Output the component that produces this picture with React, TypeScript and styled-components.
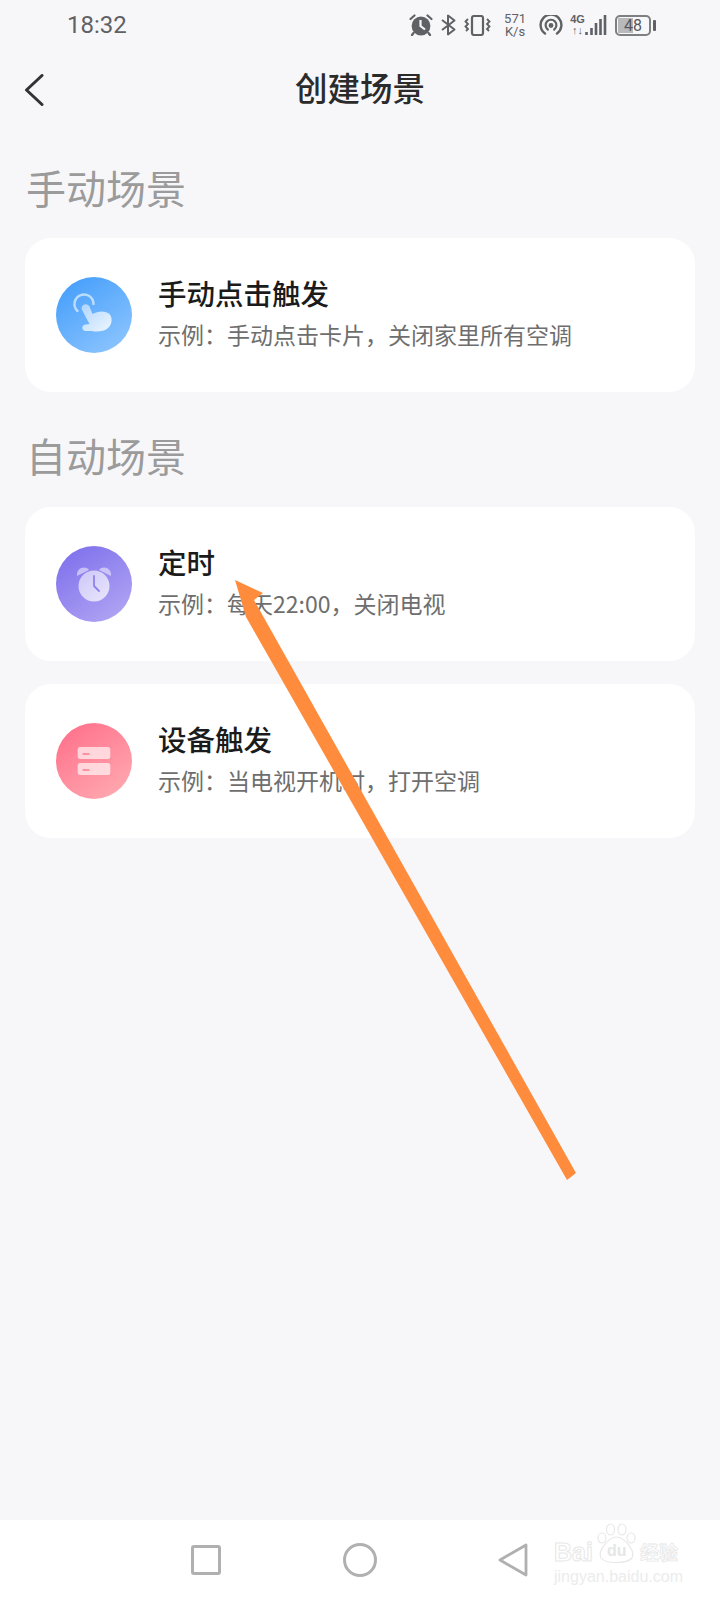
import styled, { createGlobalStyle } from 'styled-components';

const GlobalStyle = createGlobalStyle`
  html, body {
    margin: 0;
    padding: 0;
    background: #f7f7fa;
  }
  * {
    box-sizing: border-box;
  }
`;

const FONT = `"Noto Sans CJK SC", "Noto Sans", sans-serif`;

const HandIcon = () => (
  <svg width="76" height="76" viewBox="0 0 76 76">
    <defs>
      <linearGradient id="handFill" x1="0" y1="0" x2="1" y2="1">
        <stop offset="0" stopColor="#fff" stopOpacity="0.5" />
        <stop offset="1" stopColor="#fff" stopOpacity="0.85" />
      </linearGradient>
    </defs>
    <path d="M21.5 34 A9.5 9.5 0 1 1 37.5 27" fill="none" stroke="#fff" strokeOpacity="0.6" strokeWidth="2.4" strokeLinecap="round" />
    <path
      d="M25.5 32 C25.5 26 33 26 34 31 L36.5 37 C42 33.5 50 33.5 53.5 37 C57 41 56 48 52 51 C48 55 40 55 36 54 L30 54 C25 54 25 47.5 30 47.5 L33.5 47 Z"
      fill="url(#handFill)"
    />
  </svg>
);

const ClockIcon = () => (
  <svg width="76" height="76" viewBox="0 0 76 76">
    <defs>
      <linearGradient id="clockFill" x1="0" y1="0" x2="1" y2="1">
        <stop offset="0" stopColor="#fff" stopOpacity="0.55" />
        <stop offset="1" stopColor="#fff" stopOpacity="0.75" />
      </linearGradient>
    </defs>
    <path d="M21 30 C20 22 29 19 33 24 Z" fill="#fff" fillOpacity="0.5" />
    <path d="M55 30 C56 22 47 19 43 24 Z" fill="#fff" fillOpacity="0.5" />
    <circle cx="38" cy="40" r="15.5" fill="url(#clockFill)" />
    <path d="M38 30 V40 L43 45" fill="none" stroke="#8f82ee" strokeWidth="1.8" strokeLinecap="round" strokeLinejoin="round" />
  </svg>
);

const ServerIcon = () => (
  <svg width="76" height="76" viewBox="0 0 76 76">
    <rect x="21.7" y="24" width="32.6" height="12" rx="2.5" fill="#fff" fillOpacity="0.65" />
    <rect x="21.7" y="40" width="32.6" height="12" rx="2.5" fill="#fff" fillOpacity="0.65" />
    <path d="M27 31 H33 M27 47 H33" stroke="#fb7d90" strokeWidth="1.4" strokeLinecap="round" />
  </svg>
);

const AlarmGlyph = () => (
  <svg width="24" height="22" viewBox="0 0 24 22">
    <circle cx="12" cy="12" r="9.4" fill="#5f6165" />
    <path d="M11.5 6 V12 L16 15.5" fill="none" stroke="#f7f7fa" strokeWidth="2.2" />
    <path d="M1.5 5 L5.5 1.5 M22.5 5 L18.5 1.5 M4.5 19 L3 21 M19.5 19 L21 21" stroke="#5f6165" strokeWidth="2.2" strokeLinecap="round" />
  </svg>
);

const BluetoothGlyph = () => (
  <svg width="15" height="22" viewBox="0 0 15 22">
    <path d="M1 6 L13.5 15.5 L7 20.5 V1.5 L13.5 6.5 L1 16" fill="none" stroke="#5f6165" strokeWidth="2" strokeLinejoin="round" />
  </svg>
);

const VibrateGlyph = () => (
  <svg width="27" height="21" viewBox="0 0 27 21">
    <rect x="8" y="1" width="11" height="19" rx="2" fill="none" stroke="#5f6165" strokeWidth="2.2" />
    <path d="M4 4 L1.5 6.5 L4 9 L1.5 11.5 L4 14 L2 16 M23 4 L25.5 6.5 L23 9 L25.5 11.5 L23 14 L25 16" fill="none" stroke="#5f6165" strokeWidth="1.8" />
  </svg>
);

const HotspotGlyph = () => (
  <svg width="24" height="20" viewBox="0 0 24 20">
    <path d="M6 18.5 A10.4 10.4 0 1 1 18 18.5" fill="none" stroke="#5f6165" strokeWidth="2.4" strokeLinecap="round" />
    <path d="M8.8 14.5 A5.4 5.4 0 1 1 15.2 14.5" fill="none" stroke="#5f6165" strokeWidth="2.2" strokeLinecap="round" />
    <circle cx="12" cy="10.5" r="2.4" fill="#5f6165" />
  </svg>
);

const SignalGlyph = () => (
  <svg width="22" height="22" viewBox="0 0 22 22">
    <path d="M1.5 18 V21 M6.5 14 V21 M11 9 V21 M15.5 5 V21 M20 1 V21" stroke="#5f6165" strokeWidth="2.6" />
  </svg>
);

const PawGlyph = () => (
  <svg width="43" height="41" viewBox="0 0 43 41">
    <g fill="none" stroke="#e8e8e8" strokeWidth="1.2">
      <ellipse cx="7" cy="15" rx="4" ry="5" />
      <ellipse cx="15.5" cy="6.5" rx="4" ry="5.5" />
      <ellipse cx="27" cy="6.5" rx="4" ry="5.5" />
      <ellipse cx="36" cy="15" rx="4" ry="5" />
      <path d="M21.5 14 C14 14 2 28 6 35 C10 41 32 41 37 35 C41 28 29 14 21.5 14 Z" />
    </g>
  </svg>
);

const scenes = {
  manual: {
    title: '手动点击触发',
    desc: '示例：手动点击卡片，关闭家里所有空调',
    from: '#3f9bfb',
    to: '#93c8fe',
    icon: <HandIcon />,
  },
  timer: {
    title: '定时',
    desc: '示例：每天22:00，关闭电视',
    from: '#7a6ceb',
    to: '#b5a9f4',
    icon: <ClockIcon />,
  },
  device: {
    title: '设备触发',
    desc: '示例：当电视开机时，打开空调',
    from: '#ff6c88',
    to: '#ffaeb3',
    icon: <ServerIcon />,
  },
};

const SceneRow = ({ scene }: { scene: keyof typeof scenes }) => {
  const item = scenes[scene];
  return (
    <S_Card>
      <S_IconCircle $from={item.from} $to={item.to}>
        {item.icon}
      </S_IconCircle>
      <S_CardText>
        <S_CardTitle>{item.title}</S_CardTitle>
        <S_CardDesc>{item.desc}</S_CardDesc>
      </S_CardText>
    </S_Card>
  );
};

const App = () => {
  return (
    <S_Page>
      <GlobalStyle />
      <S_StatusBar>
        <S_Time>18:32</S_Time>
        <S_StatusIcons>
          <AlarmGlyph />
          <BluetoothGlyph />
          <VibrateGlyph />
          <S_Speed>
            <span>571</span>
            <span>K/s</span>
          </S_Speed>
          <HotspotGlyph />
          <S_Network>
            <S_NetworkText>
              <span>4G</span>
              <span>↑↓</span>
            </S_NetworkText>
            <SignalGlyph />
          </S_Network>
          <S_Battery>
            <S_BatteryBody>
              <S_BatteryLevel />
              <S_BatteryText>48</S_BatteryText>
            </S_BatteryBody>
            <S_BatteryNub />
          </S_Battery>
        </S_StatusIcons>
      </S_StatusBar>

      <S_Header>
        <S_Back>
          <svg width="20" height="32" viewBox="0 0 20 32">
            <path d="M18 1.5 L2.5 16 L18 30.5" fill="none" stroke="#333" strokeWidth="3" strokeLinecap="round" strokeLinejoin="round" />
          </svg>
        </S_Back>
        <S_Title>创建场景</S_Title>
      </S_Header>

      <S_Content>
        <S_SectionLabel>手动场景</S_SectionLabel>
        <SceneRow scene="manual" />
        <S_SectionLabel>自动场景</S_SectionLabel>
        <S_CardList>
          <SceneRow scene="timer" />
          <SceneRow scene="device" />
        </S_CardList>
      </S_Content>

      <S_NavBar>
        <S_NavSquare />
        <S_NavCircle />
        <svg width="30" height="34" viewBox="0 0 30 34">
          <path d="M28 2 L2 17 L28 32 Z" fill="none" stroke="#b0b0b0" strokeWidth="2.8" strokeLinejoin="round" />
        </svg>
      </S_NavBar>

      <S_Watermark>
        <S_WatermarkTop>
          <S_WatermarkLogo>Bai</S_WatermarkLogo>
          <S_PawWrap>
            <PawGlyph />
            <S_PawText>du</S_PawText>
          </S_PawWrap>
          <S_WatermarkCn>经验</S_WatermarkCn>
        </S_WatermarkTop>
        <S_WatermarkUrl>jingyan.baidu.com</S_WatermarkUrl>
      </S_Watermark>

      <S_Arrow width="720" height="1600" viewBox="0 0 720 1600">
        <polygon points="235,580 263,593 254,600 576,1173 567,1180 246,617" fill="#ff8c3c" />
      </S_Arrow>
    </S_Page>
  );
};

export default App;

const S_Page = styled.div`
  position: relative;
  display: flex;
  flex-direction: column;
  width: 720px;
  height: 1600px;
  overflow: hidden;
  background: #f7f7fa;
  font-family: ${FONT};
`;

const S_StatusBar = styled.div`
  display: flex;
  align-items: center;
  justify-content: space-between;
  height: 50px;
  padding: 0 64px 0 67px;
  color: #5f6165;
`;

const S_Time = styled.span`
  font-family: Roboto, sans-serif;
  font-size: 24px;
`;

const S_StatusIcons = styled.div`
  display: flex;
  align-items: center;
  gap: 8px;
`;

const S_Speed = styled.div`
  display: flex;
  flex-direction: column;
  align-items: center;
  margin: 0 5px 0 5px;
  font-family: Roboto, sans-serif;
  font-size: 13px;
  line-height: 13px;
`;

const S_Network = styled.div`
  display: flex;
  align-items: flex-end;
  gap: 1px;
`;

const S_NetworkText = styled.div`
  display: flex;
  flex-direction: column;
  align-items: center;
  width: 13px;
  font-family: "Liberation Sans", sans-serif;
  font-size: 11px;
  font-weight: 700;
  line-height: 11px;
`;

const S_Battery = styled.div`
  display: flex;
  align-items: center;
  gap: 2px;
`;

const S_BatteryBody = styled.div`
  position: relative;
  display: flex;
  align-items: center;
  justify-content: center;
  width: 36px;
  height: 21px;
  border: 2px solid #7d7f83;
  border-radius: 5px;
  overflow: hidden;
`;

const S_BatteryLevel = styled.div`
  position: absolute;
  left: 1px;
  top: 1px;
  bottom: 1px;
  width: 15px;
  background: #b8b9bb;
`;

const S_BatteryText = styled.span`
  position: relative;
  font-family: Roboto, sans-serif;
  font-size: 16px;
  line-height: 17px;
  color: #55575a;
`;

const S_BatteryNub = styled.div`
  width: 3px;
  height: 11px;
  border-radius: 1px;
  background: #5f6165;
`;

const S_Header = styled.div`
  position: relative;
  display: flex;
  align-items: center;
  justify-content: center;
  height: 80px;
  padding-bottom: 6px;
`;

const S_Back = styled.div`
  position: absolute;
  left: 24px;
  top: 24px;
  line-height: 0;
`;

const S_Title = styled.h1`
  margin: 0;
  font-size: 32.5px;
  font-weight: 500;
  line-height: 44px;
  color: #2b2b2b;
`;

const S_Content = styled.div`
  flex: 1;
  padding: 0 25px;
`;

const S_SectionLabel = styled.h2`
  margin: 0;
  padding: 36px 0 24px 1px;
  font-size: 40px;
  font-weight: 400;
  line-height: 55px;
  color: #9b9b9b;
  &:first-child {
    padding: 30px 0 23px 1px;
  }
`;

const S_CardList = styled.div`
  display: flex;
  flex-direction: column;
  gap: 23px;
`;

const S_Card = styled.div`
  display: flex;
  align-items: center;
  gap: 26px;
  height: 154px;
  padding-left: 31px;
  border-radius: 26px;
  background: #fff;
`;

const S_IconCircle = styled.div<{ $from: string; $to: string }>`
  width: 76px;
  height: 76px;
  border-radius: 50%;
  line-height: 0;
  background: linear-gradient(145deg, ${p => p.$from}, ${p => p.$to});
`;

const S_CardText = styled.div`
  display: flex;
  flex-direction: column;
  gap: 8px;
  padding-bottom: 6px;
`;

const S_CardTitle = styled.div`
  font-size: 28.5px;
  font-weight: 500;
  line-height: 36px;
  color: #1b1b1b;
`;

const S_CardDesc = styled.div`
  font-size: 23px;
  line-height: 30px;
  color: #6e6e6e;
`;

const S_NavBar = styled.div`
  display: flex;
  align-items: center;
  justify-content: space-between;
  height: 80px;
  padding: 0 192px 0 191px;
  background: #fff;
`;

const S_NavSquare = styled.div`
  width: 30px;
  height: 30px;
  border: 3px solid #b0b0b0;
  border-radius: 3px;
`;

const S_NavCircle = styled.div`
  width: 34px;
  height: 34px;
  border: 3px solid #b0b0b0;
  border-radius: 50%;
`;

const S_Watermark = styled.div`
  position: absolute;
  left: 554px;
  top: 1523px;
  width: 130px;
`;

const S_WatermarkTop = styled.div`
  display: flex;
  align-items: flex-end;
`;

const S_WatermarkLogo = styled.span`
  width: 41px;
  font-family: "Liberation Sans", sans-serif;
  font-size: 25px;
  font-weight: 700;
  line-height: 24px;
  color: transparent;
  -webkit-text-stroke: 1px #e8e8e8;
`;

const S_WatermarkCn = styled.span`
  margin-left: 2px;
  font-size: 19px;
  font-weight: 700;
  line-height: 24px;
  white-space: nowrap;
  color: transparent;
  -webkit-text-stroke: 0.8px #e8e8e8;
`;

const S_PawWrap = styled.div`
  position: relative;
  width: 43px;
  height: 41px;
  line-height: 0;
`;

const S_PawText = styled.span`
  position: absolute;
  left: 12px;
  top: 22px;
  font-family: "Liberation Sans", sans-serif;
  font-size: 16px;
  font-weight: 700;
  line-height: 12px;
  color: #e6e6e6;
`;

const S_WatermarkUrl = styled.div`
  margin-top: 6px;
  font-family: "Liberation Sans", sans-serif;
  font-size: 16px;
  line-height: 14px;
  color: #ececec;
  white-space: nowrap;
`;

const S_Arrow = styled.svg`
  position: absolute;
  left: 0;
  top: 0;
  pointer-events: none;
  filter: blur(0.6px);
`;
